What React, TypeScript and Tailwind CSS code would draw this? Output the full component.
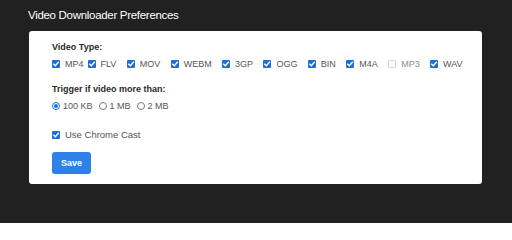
import React from "react";

const font = { fontFamily: '"Liberation Sans", Arial, sans-serif' };

function Check({ checked = true }: { checked?: boolean }) {
  if (!checked) {
    return <span className="block w-[8px] h-[8px] rounded-[1px] border border-[#d6d6d6] bg-[#fafafa]" />;
  }
  return (
    <span className="flex items-center justify-center w-[8px] h-[8px] rounded-[1px] bg-[#1c6fd9]">
      <svg width="8" height="8" viewBox="0 0 10 10">
        <path d="M2.2 5.2 L4.2 7.2 L7.9 2.9" fill="none" stroke="#ffffff" strokeWidth="1.7" strokeLinecap="square" />
      </svg>
    </span>
  );
}

function Radio({ checked = false }: { checked?: boolean }) {
  if (checked) {
    return (
      <span className="flex items-center justify-center w-[8px] h-[8px] rounded-full border border-[#1c6fd9] bg-white">
        <span className="block w-[4px] h-[4px] rounded-full bg-[#1c6fd9]" />
      </span>
    );
  }
  return <span className="block w-[8px] h-[8px] rounded-full border border-[#7a7a7a] bg-white" />;
}

const types: { name: string; checked: boolean }[] = [
  { name: "MP4", checked: true },
  { name: "FLV", checked: true },
  { name: "MOV", checked: true },
  { name: "WEBM", checked: true },
  { name: "3GP", checked: true },
  { name: "OGG", checked: true },
  { name: "BIN", checked: true },
  { name: "M4A", checked: true },
  { name: "MP3", checked: false },
  { name: "WAV", checked: true },
];

export default function App() {
  return (
    <div className="w-[512px] h-[223px] bg-[#212121] overflow-hidden" style={font}>
      <div className="pl-[28px] pt-[8px] text-[11.5px] leading-[14px] tracking-[-0.3px] text-white">
        Video Downloader Preferences
      </div>
      <div className="ml-[29px] mt-[9px] w-[453px] rounded-[3px] bg-white pl-[23px] pt-[10px] pb-[10px]">
        <div className="text-[9px] leading-[12px] font-bold text-[#2a2a2a]">Video Type:</div>
        <div className="mt-[5px] flex items-center h-[12px] text-[9px] leading-[12px] text-[#555]">
          {types.map((t, i) => (
            <div key={t.name} className={i === 0 ? "flex items-center mr-[4px]" : "flex items-center mr-[10.4px]"}>
              <Check checked={t.checked} />
              <span className={t.checked ? "ml-[5px]" : "ml-[5px] text-[#8a8a8a]"}>{t.name}</span>
            </div>
          ))}
        </div>
        <div className="mt-[13px] text-[9px] leading-[12px] font-bold text-[#2a2a2a]">Trigger if video more than:</div>
        <div className="mt-[5px] flex items-center h-[12px] text-[9px] leading-[12px] text-[#555]">
          <Radio checked />
          <span className="ml-[3px] mr-[6px]">100 KB</span>
          <Radio />
          <span className="ml-[3px] mr-[6px]">1 MB</span>
          <Radio />
          <span className="ml-[3px]">2 MB</span>
        </div>
        <div className="mt-[17px] flex items-center h-[12px] text-[9.5px] leading-[12px] text-[#555]">
          <Check />
          <span className="ml-[5px]">Use Chrome Cast</span>
        </div>
        <div className="mt-[11px] flex">
          <button className="h-[22px] px-[9px] rounded-[3px] bg-[#2f80e8] text-white text-[9px] font-bold leading-[22px]">
            Save
          </button>
        </div>
      </div>
    </div>
  );
}
